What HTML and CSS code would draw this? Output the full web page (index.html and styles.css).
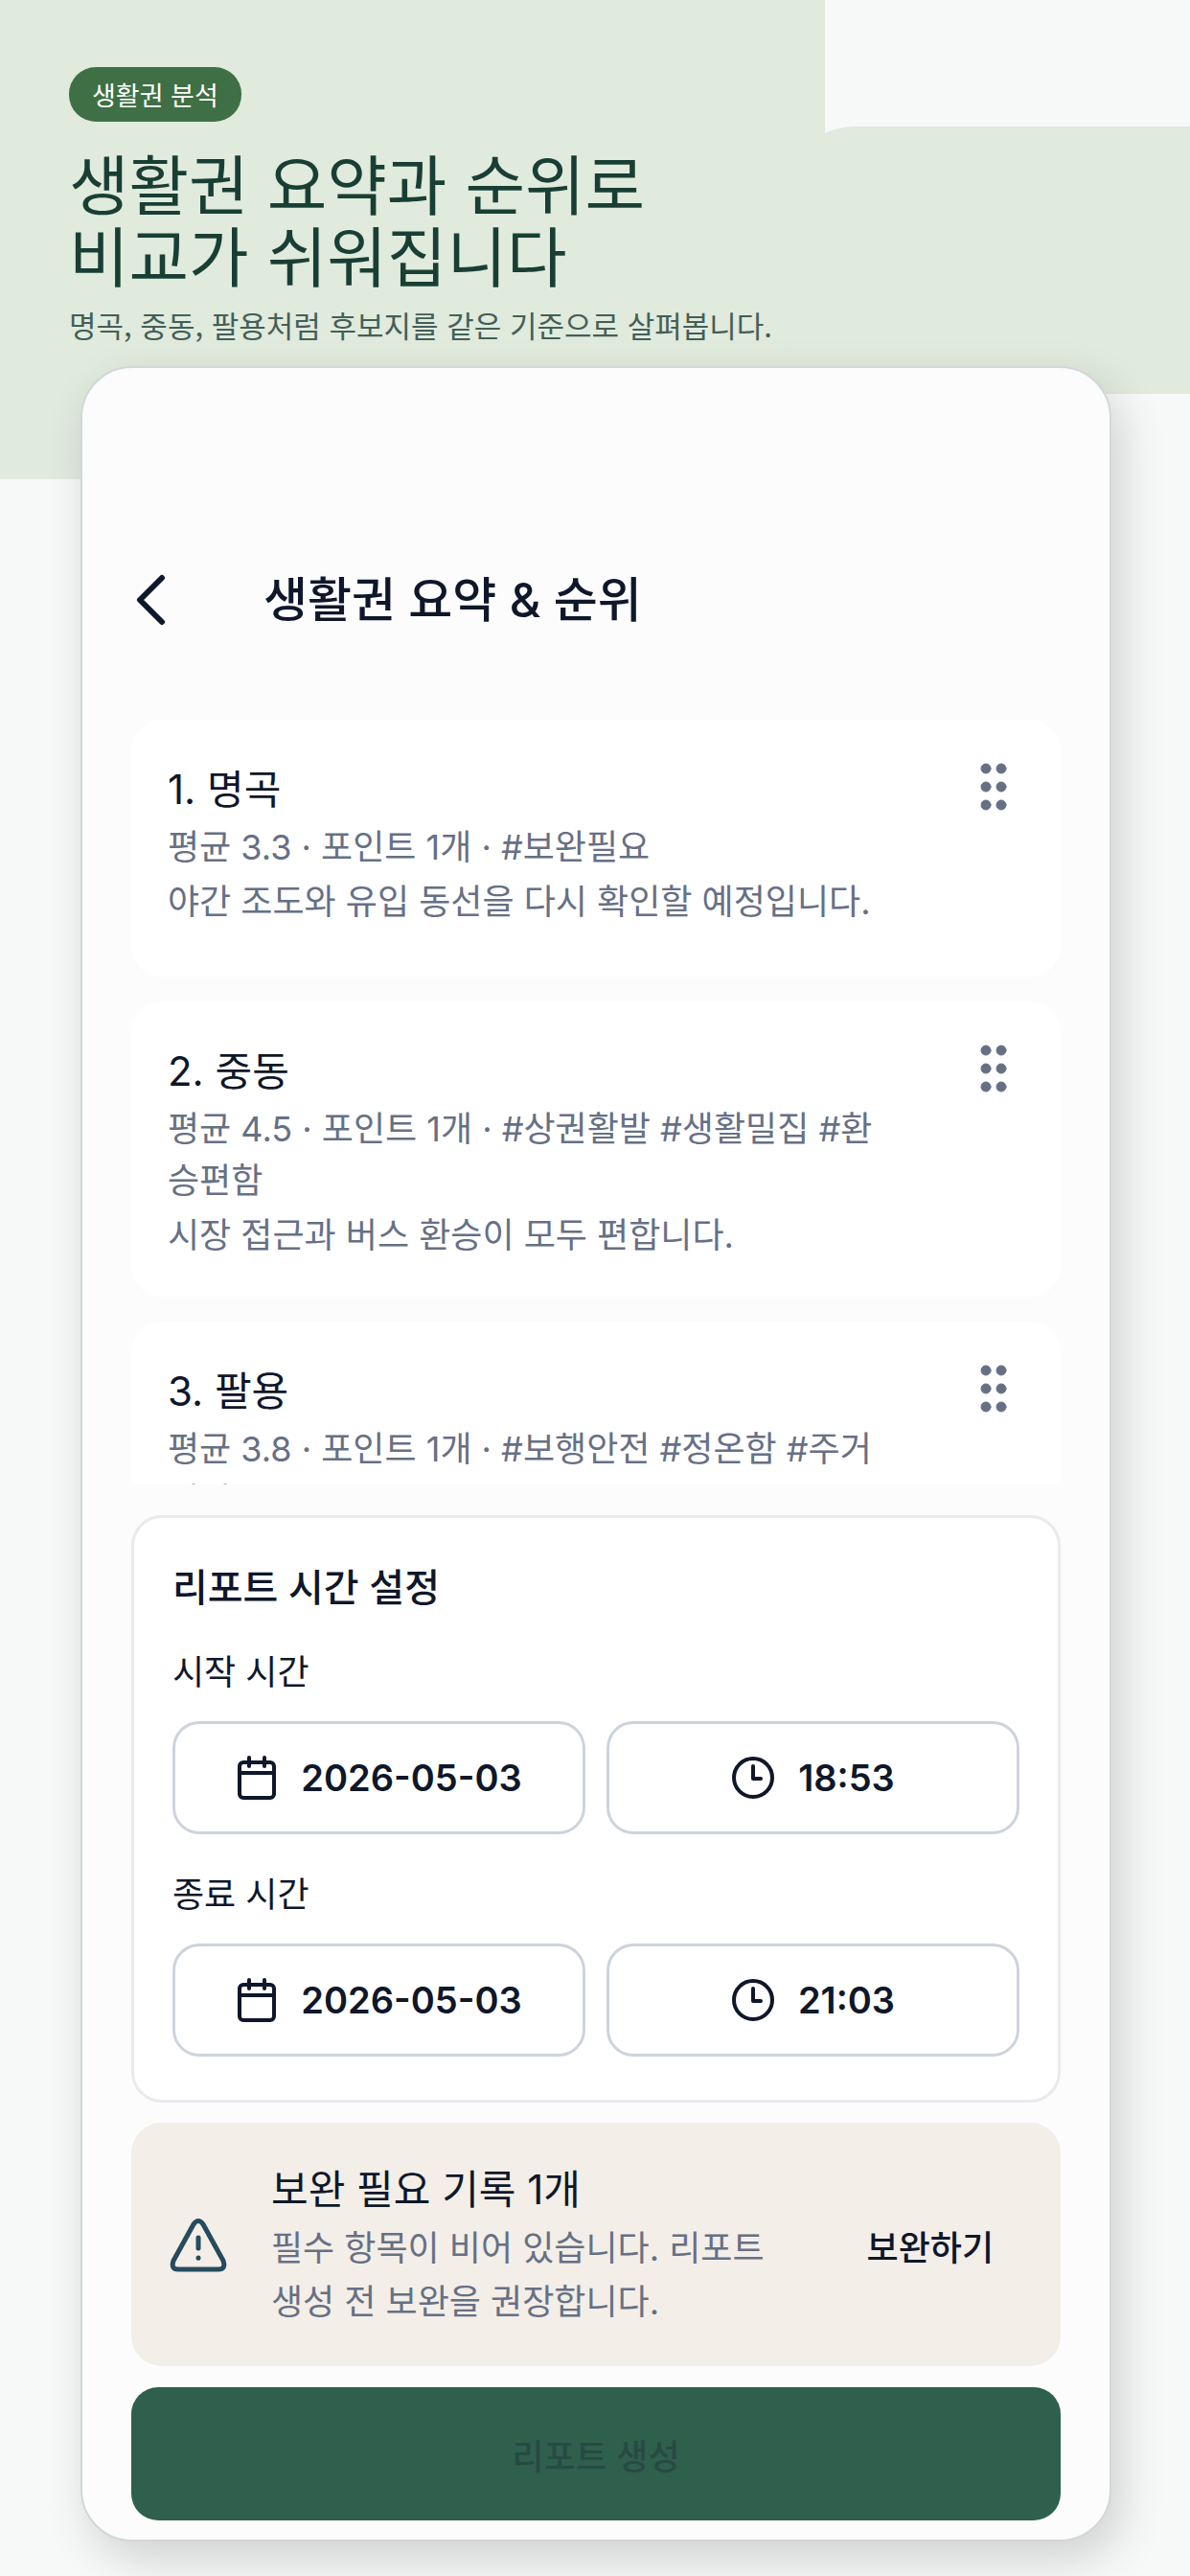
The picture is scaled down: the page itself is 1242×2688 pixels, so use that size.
FILE: index.html
```html
<!DOCTYPE html>
<html lang="ko">
<head>
    <meta charset="UTF-8">
    <meta name="viewport" content="width=device-width, initial-scale=1.0">
    <title>생활권 요약 &amp; 순위</title>
    <link rel="stylesheet" href="styles.css">
</head>
<body>
    <div class="backdrop backdrop-left"></div>
    <div class="backdrop backdrop-right"></div>

    <header class="hero">
        <div class="badge">생활권 분석</div>
        <h1>생활권 요약과 순위로<br>비교가 쉬워집니다</h1>
        <p>명곡, 중동, 팔용처럼 후보지를 같은 기준으로 살펴봅니다.</p>
    </header>

    <main class="phone">
        <div class="app-bar">
            <button class="back" type="button" aria-label="뒤로">
                <svg width="32" height="54" viewBox="0 0 32 54"><path d="M28 4 L5 27 L28 50"/></svg>
            </button>
            <h2>생활권 요약 &amp; 순위</h2>
        </div>

        <ul class="ranking">
            <li class="area">
                <div class="area-text">
                    <h3>1. 명곡</h3>
                    <p>평균 3.3 · 포인트 1개 · #보완필요</p>
                    <p>야간 조도와 유입 동선을 다시 확인할 예정입니다.</p>
                </div>
                <button class="handle" type="button" aria-label="순서 변경">
                    <svg width="28" height="50" viewBox="0 0 28 50"><circle cx="6" cy="6" r="5"/><circle cx="22" cy="6" r="5"/><circle cx="6" cy="25" r="5"/><circle cx="22" cy="25" r="5"/><circle cx="6" cy="44" r="5"/><circle cx="22" cy="44" r="5"/></svg>
                </button>
            </li>
            <li class="area">
                <div class="area-text">
                    <h3>2. 중동</h3>
                    <p>평균 4.5 · 포인트 1개 · #상권활발 #생활밀집 #환승편함</p>
                    <p>시장 접근과 버스 환승이 모두 편합니다.</p>
                </div>
                <button class="handle" type="button" aria-label="순서 변경">
                    <svg width="28" height="50" viewBox="0 0 28 50"><circle cx="6" cy="6" r="5"/><circle cx="22" cy="6" r="5"/><circle cx="6" cy="25" r="5"/><circle cx="22" cy="25" r="5"/><circle cx="6" cy="44" r="5"/><circle cx="22" cy="44" r="5"/></svg>
                </button>
            </li>
            <li class="area">
                <div class="area-text">
                    <h3>3. 팔용</h3>
                    <p>평균 3.8 · 포인트 1개 · #보행안전 #정온함 #주거편리</p>
                </div>
                <button class="handle" type="button" aria-label="순서 변경">
                    <svg width="28" height="50" viewBox="0 0 28 50"><circle cx="6" cy="6" r="5"/><circle cx="22" cy="6" r="5"/><circle cx="6" cy="25" r="5"/><circle cx="22" cy="25" r="5"/><circle cx="6" cy="44" r="5"/><circle cx="22" cy="44" r="5"/></svg>
                </button>
            </li>
        </ul>

        <section class="report">
            <h3>리포트 시간 설정</h3>
            <p id="start-label">시작 시간</p>
            <div class="pickers" role="group" aria-labelledby="start-label">
                <button class="picker" type="button">
                    <svg width="44" height="46" viewBox="0 0 44 46"><rect x="4" y="7" width="36" height="37" rx="4"/><path d="M4 18H40M14 2V11M30 2V11"/></svg>
                    2026-05-03
                </button>
                <button class="picker" type="button">
                    <svg width="46" height="46" viewBox="0 0 46 46"><circle cx="23" cy="23" r="20"/><path d="M23 11V24H31"/></svg>
                    18:53
                </button>
            </div>
            <p id="end-label">종료 시간</p>
            <div class="pickers" role="group" aria-labelledby="end-label">
                <button class="picker" type="button">
                    <svg width="44" height="46" viewBox="0 0 44 46"><rect x="4" y="7" width="36" height="37" rx="4"/><path d="M4 18H40M14 2V11M30 2V11"/></svg>
                    2026-05-03
                </button>
                <button class="picker" type="button">
                    <svg width="46" height="46" viewBox="0 0 46 46"><circle cx="23" cy="23" r="20"/><path d="M23 11V24H31"/></svg>
                    21:03
                </button>
            </div>
        </section>

        <section class="notice">
            <svg width="60" height="56" viewBox="0 0 60 56"><path d="M25 6 L4 44 Q1 53 9 53 H51 Q59 53 56 44 L35 6 Q30 -1 25 6 Z"/><path d="M30 20V31M30 41V41.2"/></svg>
            <div class="notice-text">
                <h3>보완 필요 기록 1개</h3>
                <p>필수 항목이 비어 있습니다. 리포트 생성 전 보완을 권장합니다.</p>
            </div>
            <button class="notice-action" type="button">보완하기</button>
        </section>

        <button class="submit" type="button" disabled>리포트 생성</button>
    </main>
</body>
</html>
```
FILE: styles.css
```css
* {
    box-sizing: border-box;
}
body {
    margin: 0;
    height: 100vh;
    display: flex;
    flex-direction: column;
    position: relative;
    overflow: hidden;
    background-color: #f7f9f8;
    color: #0f172a;
    font-family: Inter, "Noto Sans CJK KR", sans-serif;
}
h1, h2, h3, p, ul {
    margin: 0;
    padding: 0;
    font-weight: 400;
}
button {
    padding: 0;
    border: none;
    background: none;
    color: inherit;
    font-family: inherit;
}
svg {
    display: block;
    flex: none;
    fill: none;
    stroke: currentColor;
    stroke-width: 4;
    stroke-linecap: round;
    stroke-linejoin: round;
}

/* 배경 도형 */
.backdrop {
    position: absolute;
    background-color: #e0eadd;
}
.backdrop-left {
    top: 0;
    left: 0;
    width: 861px;
    height: 500px;
}
.backdrop-right {
    top: 132px;
    left: 820px;
    right: 0;
    height: 279px;
    border-radius: 72px 0 0 72px;
}

/* 상단 소개 */
.hero {
    position: relative;
    padding: 70px 72px 21px;
    font-family: "Noto Sans CJK KR", sans-serif;
}
.badge {
    width: fit-content;
    padding: 0 24px;
    border-radius: 28px;
    background-color: #3f6f44;
    color: #ffffff;
    font-size: 27px;
    line-height: 57px;
}
.hero h1 {
    margin-top: 25px;
    color: #193f34;
    font-size: 68px;
    line-height: 75px;
}
.hero p {
    margin-top: 15px;
    color: #435f57;
    font-size: 31px;
    line-height: 44px;
}

/* 앱 화면 */
.phone {
    position: relative;
    flex: 1;
    min-height: 0;
    display: flex;
    flex-direction: column;
    margin: 0 82px 36px 84px;
    padding: 0 51px 20px;
    border: 2px solid #d3d7da;
    border-radius: 54px;
    background-color: #fcfcfc;
    box-shadow: 10px 18px 48px rgba(0, 0, 0, 0.16);
}
.app-bar {
    display: flex;
    align-items: center;
    gap: 102px;
    padding: 206px 4px 89px;
}
.app-bar h2 {
    font-size: 50px;
    font-weight: 500;
    line-height: 72px;
}
.back svg {
    stroke-width: 6;
}

/* 순위 목록 */
.ranking {
    flex: 1;
    min-height: 0;
    display: flex;
    flex-direction: column;
    gap: 26px;
    overflow: hidden;
    list-style: none;
}
.area {
    flex: none;
    display: flex;
    align-items: flex-start;
    gap: 104px;
    min-height: 268px;
    padding: 43px 56px 37px 38px;
    border-radius: 32px;
    background-color: #ffffff;
}
.area-text {
    flex: 1;
}
.area h3,
.notice h3 {
    font-size: 42px;
    line-height: 60px;
}
.area p,
.notice p {
    margin-top: 3px;
    color: #667085;
    font-size: 36px;
    line-height: 54px;
}
.handle {
    margin-top: 2px;
    color: #667085;
}
.handle svg {
    fill: currentColor;
    stroke-width: 1;
}

/* 리포트 시간 */
.report {
    margin-top: 32px;
    padding: 43px 40px 45px;
    border: 3px solid #e8eaee;
    border-radius: 32px;
    background-color: #ffffff;
}
.report h3 {
    font-size: 40px;
    font-weight: 500;
    line-height: 60px;
}
.report p {
    margin: 31px 0 24px;
    font-size: 36px;
    line-height: 54px;
}
.report .pickers + p {
    margin-top: 36px;
}
.pickers {
    display: grid;
    grid-template-columns: 1fr 1fr;
    gap: 22px;
}
.picker {
    display: flex;
    justify-content: center;
    align-items: center;
    gap: 24px;
    height: 118px;
    border: 3px solid #cdd3dd;
    border-radius: 28px;
    font-size: 38px;
    font-weight: 600;
}

/* 보완 안내 */
.notice {
    display: flex;
    align-items: center;
    gap: 46px;
    margin-top: 21px;
    padding: 40px 70px 39px 40px;
    border-radius: 32px;
    background-color: #f3eee7;
}
.notice > svg {
    color: #264b5d;
    stroke-width: 5;
}
.notice-text {
    flex: 1;
    word-break: keep-all;
}
.notice p {
    line-height: 56px;
}
.notice-action {
    font-size: 36px;
    font-weight: 500;
}
.submit {
    height: 139px;
    margin-top: 22px;
    flex: none;
    border-radius: 28px;
    background-color: #2f5f4d;
    color: #274a44;
    font-size: 36px;
    font-weight: 500;
}
```
